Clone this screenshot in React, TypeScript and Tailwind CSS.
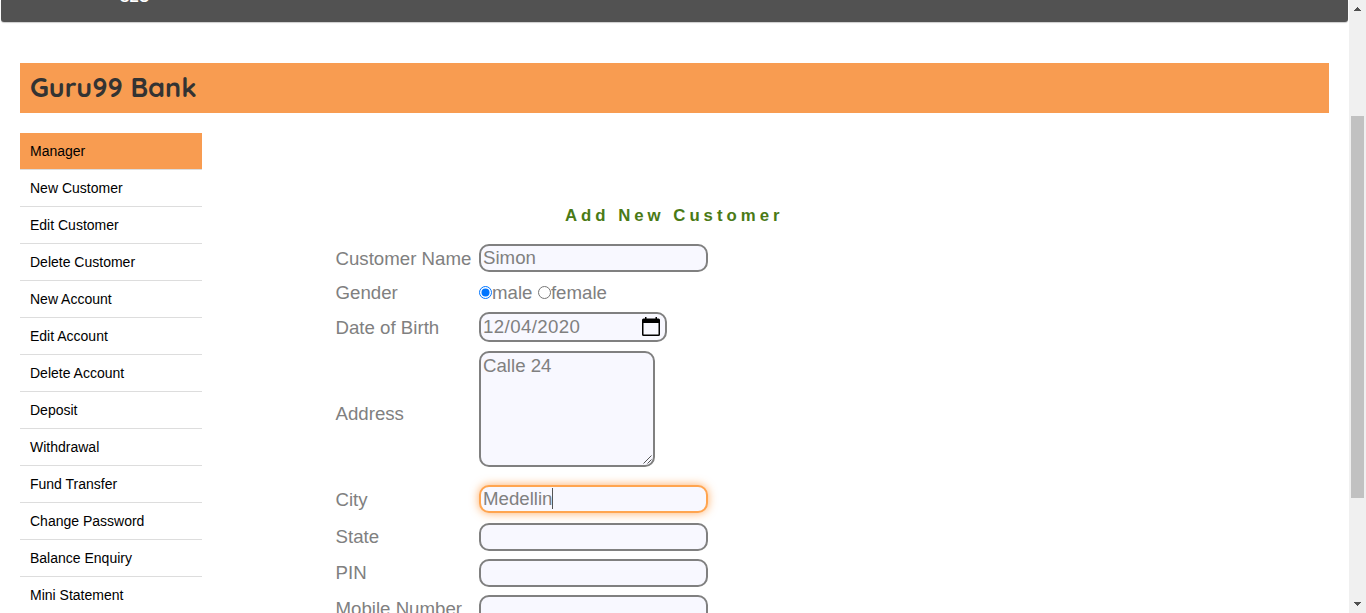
import type { ReactNode } from "react";

const menu = [
  "Manager",
  "New Customer",
  "Edit Customer",
  "Delete Customer",
  "New Account",
  "Edit Account",
  "Delete Account",
  "Deposit",
  "Withdrawal",
  "Fund Transfer",
  "Change Password",
  "Balance Enquiry",
  "Mini Statement",
];

function Row({ label, className, labelClass = "", children }: { label: string; className: string; labelClass?: string; children: ReactNode }) {
  return (
    <div className={`flex shrink-0 items-start ${className}`}>
      <div className={`w-[144px] shrink-0 pl-[0.5px] leading-[21px] whitespace-nowrap ${labelClass}`}>{label}</div>
      {children}
    </div>
  );
}

function Field({ value = "", focused = false }: { value?: string; focused?: boolean }) {
  return (
    <div
      className={`flex h-7 w-[229px] items-start rounded-[10px] border-2 bg-[#f8f8ff] pl-[2px] leading-[23px] ${
        focused ? "border-[#ffa550] shadow-[0_0_10px_rgba(255,145,50,0.75)]" : "border-[#808080]"
      }`}
    >
      <span>{value}</span>
      {focused && <span className="mt-px h-[21px] w-px bg-[#555]" />}
    </div>
  );
}

function Radio({ checked = false }: { checked?: boolean }) {
  return (
    <svg width="13" height="13" viewBox="0 0 13 13" className="mt-[5px] shrink-0">
      <circle cx="6.5" cy="6.5" r="6" fill="#fff" stroke={checked ? "#0075ff" : "#767676"} />
      {checked && <circle cx="6.5" cy="6.5" r="4" fill="#0075ff" />}
    </svg>
  );
}

function CalendarIcon() {
  return (
    <svg width="18" height="20" viewBox="0 0 18 20" className="mt-[3px] shrink-0">
      <path
        d="M3 0h1.500v1.500h9V0H15v1.500h1.500A1.500 1.500 0 0 1 18 3v14.500a1.500 1.500 0 0 1-1.500 1.500h-15A1.500 1.500 0 0 1 0 17.500V3A1.500 1.500 0 0 1 1.500 1.500H3zM1.500 6v11.500h15V6z"
        fill="#000"
        fillRule="evenodd"
      />
    </svg>
  );
}

function Scrollbar() {
  return (
    <div className="flex w-[17px] shrink-0 flex-col items-center bg-[#f0f0f0]">
      <svg width="7" height="4" viewBox="0 0 7 4" className="mt-[7px]" shapeRendering="crispEdges">
        <path d="M3 0h1v1h1v1h1v1h1v1H0V3h1V2h1V1h1z" fill="#505050" />
      </svg>
      <div className="mt-[105px] h-[382px] w-[13px] bg-[#c1c1c1]" />
      <svg width="7" height="4" viewBox="0 0 7 4" className="mt-[104px]" shapeRendering="crispEdges">
        <path d="M0 0h7v1H6v1H5v1H4v1H3V3H2V2H1V1H0z" fill="#505050" />
      </svg>
    </div>
  );
}

export default function App() {
  return (
    <div className="flex h-[613px] w-[1366px] overflow-hidden bg-white font-['Liberation_Sans',Arial,sans-serif]">
      <div className="flex min-w-0 flex-1 flex-col">
        <nav className="mr-px ml-px flex h-[22px] shrink-0 items-start overflow-hidden rounded-b-[3px] bg-[#525252] shadow-[0_1px_1px_rgba(0,0,0,0.2)]">
          <span className="-mt-[13px] ml-[119px] text-[14px] leading-5 font-bold text-white">SEO</span>
        </nav>
        <header className="mt-[41px] mr-5 ml-5 flex h-[50px] shrink-0 items-start bg-[#f89c51] pl-[10px]">
          <h1 className="text-[27px] leading-[48px] font-bold whitespace-nowrap text-[#333] font-[Quicksand,Lato,sans-serif]">Guru99 Bank</h1>
        </header>
        <div className="mt-5 flex min-h-0 flex-1 overflow-hidden pl-5">
          <ul className="w-[182px] shrink-0 text-[14px] text-black">
            {menu.map((item, i) => (
              <li key={item} className={`h-[37px] border-b border-[#ddd] pl-[10px] leading-9 ${i === 0 ? "bg-[#f89c51]" : ""}`}>
                {item}
              </li>
            ))}
          </ul>
          <main className="ml-[133px] flex w-[676px] flex-col pt-[73px] text-[18.667px] text-[#808080]">
            <h2 className="h-5 shrink-0 pl-[230px] text-[16.8px] leading-5 font-bold tracking-[3.98px] whitespace-nowrap text-[#4a7a16]">Add New Customer</h2>
            <Row label="Customer Name" className="mt-[18px] h-7" labelClass="mt-1">
              <Field value="Simon" />
            </Row>
            <Row label="Gender" className="mt-[9px] h-[24px]" labelClass="mt-px">
              <Radio checked />
              <span className="mt-px leading-[21px]">male</span>
              <span className="ml-[5.5px] flex items-start">
                <Radio />
                <span className="mt-px leading-[21px]">female</span>
              </span>
            </Row>
            <Row label="Date of Birth" className="mt-[7px] h-[30px]" labelClass="mt-[5px]">
              <div className="flex h-[30px] w-[188px] items-start justify-between rounded-[10px] border-2 border-[#808080] bg-[#f8f8ff] pr-[5px] pl-[2px]">
                <span className="mt-[2px] leading-[21px] tracking-[0.4px]">12/04/2020</span>
                <CalendarIcon />
              </div>
            </Row>
            <Row label="Address" className="mt-[9px] h-[116px]" labelClass="mt-[52px]">
              <div className="flex h-[116px] w-[176px] justify-between rounded-[10px] border-2 border-[#808080] bg-[#f8f8ff] pl-[2px]">
                <span className="mt-[2px] leading-[21px]">Calle 24</span>
                <svg width="9" height="9" viewBox="0 0 9 9" className="mr-px mb-px self-end">
                  <path d="M0.500 8.500l8-8M4.500 8.500l4-4" stroke="#555" fill="none" />
                </svg>
              </div>
            </Row>
            <Row label="City" className="mt-[18px] h-7" labelClass="mt-1">
              <Field value="Medellin" focused />
            </Row>
            <Row label="State" className="mt-[10px] h-7" labelClass="mt-[3px]">
              <Field />
            </Row>
            <Row label="PIN" className="mt-2 h-7" labelClass="mt-[3px]">
              <Field />
            </Row>
            <Row label="Mobile Number" className="mt-2 h-7" labelClass="mt-[3px]">
              <Field />
            </Row>
          </main>
        </div>
      </div>
      <Scrollbar />
    </div>
  );
}
